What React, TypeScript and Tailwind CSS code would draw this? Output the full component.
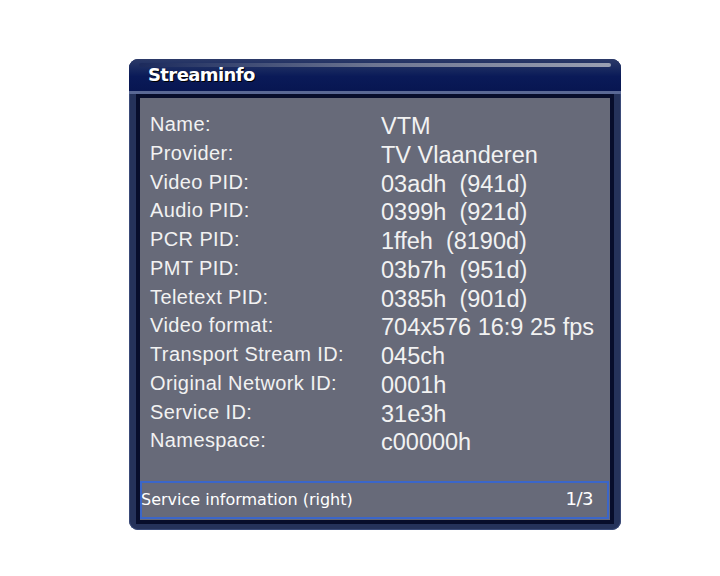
const rows: [string, string][] = [
  ["Name:", "VTM"],
  ["Provider:", "TV Vlaanderen"],
  ["Video PID:", "03adh\u00a0\u00a0(941d)"],
  ["Audio PID:", "0399h\u00a0\u00a0(921d)"],
  ["PCR PID:", "1ffeh\u00a0\u00a0(8190d)"],
  ["PMT PID:", "03b7h\u00a0\u00a0(951d)"],
  ["Teletext PID:", "0385h\u00a0\u00a0(901d)"],
  ["Video format:", "704x576 16:9 25 fps"],
  ["Transport Stream ID:", "045ch"],
  ["Original Network ID:", "0001h"],
  ["Service ID:", "31e3h"],
  ["Namespace:", "c00000h"],
];

export default function App() {
  return (
    <div className="min-h-[576px] w-[720px] bg-white pt-[59px] pl-[129px]">
      <div className="w-[492px] h-[471px] rounded-[9px] bg-[#25325a] px-[7px] pb-[6px] flex flex-col shadow-[inset_0_0_0_1px_#3a4a78]">
        {/* title bar */}
        <div className="h-[35px] -mx-[7px] rounded-t-[9px] bg-gradient-to-b from-[#2c3a68] via-[#0a1a58] to-[#071550] flex flex-col">
          <div className="h-[4px]" />
          <div className="mx-[10px] h-[4px] rounded-full bg-gradient-to-r from-[#1c2a5c] via-[#6e7692] to-[#9aa0b2]" />
          <div className="flex-1 flex items-center pl-[19px] -mt-[9px]">
            <span className="text-white font-bold text-[18px] leading-none tracking-[-0.6px] [font-family:'DejaVu_Sans',sans-serif] [text-shadow:1px_1px_0_#000]">
              Streaminfo
            </span>
          </div>
          <div className="h-[3px] bg-[#5a6894]" />
        </div>
        {/* content panel */}
        <div className="flex-1 border-4 border-[#070d2b] bg-[#676a79] flex flex-col">
          <div className="pt-[12px] pl-[10px]">
            {rows.map(([label, value]) => (
              <div key={label} className="flex h-[28.75px] text-[#f2f2f2]">
                <div className="w-[231px] shrink-0 pt-[4px] text-[20px] leading-none tracking-[0.4px] [font-family:'Liberation_Sans',sans-serif]">
                  {label}
                </div>
                <div className="pt-[5px] text-[23.5px] leading-none [font-family:'Liberation_Sans',sans-serif]">
                  {value}
                </div>
              </div>
            ))}
          </div>
          <div className="mt-auto mb-[1px] mr-[1px] h-[38px] border-2 border-[#3b66c9] flex items-center justify-between pr-[14px] text-[16px] leading-none text-white [font-family:'DejaVu_Sans',sans-serif]">
            <span className="-ml-[1px]">Service information (right)</span>
            <span className="text-[18px] tracking-[-0.5px] -mt-[3px]">1/3</span>
          </div>
        </div>
      </div>
    </div>
  );
}
